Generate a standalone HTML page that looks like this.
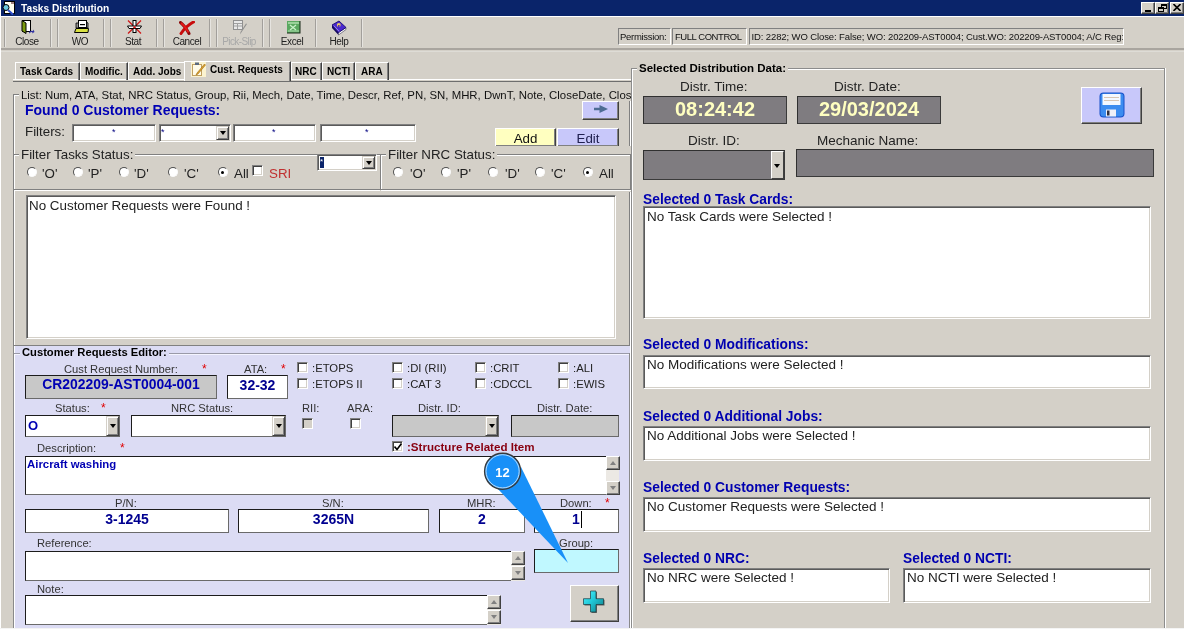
<!DOCTYPE html>
<html><head><meta charset="utf-8">
<style>
*{box-sizing:border-box;margin:0;padding:0}
html,body{width:1184px;height:629px;overflow:hidden;background:#d4d0c8;font-family:"Liberation Sans",sans-serif;color:#000}
.a{position:absolute}
.t{position:absolute;white-space:nowrap;line-height:1}
.sunk{border:1px solid;border-color:#808080 #fff #fff #808080;box-shadow:inset 1px 1px #5a5a5a,inset -1px -1px #d4d0c8;background:#fff}
.raised{border:1px solid;border-color:#fff #404040 #404040 #fff;box-shadow:inset -1px -1px #808080;background:#d4d0c8}
.etchv{position:absolute;width:2px;border-left:1px solid #a29f9b;border-right:1px solid #e6e4e0}
.etchh{position:absolute;height:2px;border-top:1px solid #808080;border-bottom:1px solid #fff}
.grp{position:absolute;border:1px solid #808080;box-shadow:inset 1px 1px #fff,1px 1px #fff}
.cap{position:absolute;white-space:nowrap;line-height:1;padding:0 2px}
.tb{font-size:10px;color:#000;text-align:center;width:46px}
.tab{position:absolute;top:62px;height:18px;border-top:1px solid #fff;border-left:1px solid #fff;border-right:1px solid #404040;box-shadow:inset -1px 0 #808080;font-size:10px;font-weight:bold;text-align:center;line-height:15px}
.lbl{position:absolute;white-space:nowrap;line-height:1;font-size:12px;color:#333}
.blue{color:#0000a8}
.hdr{position:absolute;white-space:nowrap;line-height:1;font-size:13px;font-weight:bold;color:#0000b0}
.ddb{position:absolute;width:13px;border:1px solid;border-color:#d4d0c8 #404040 #404040 #d4d0c8;box-shadow:inset 1px 1px #fff,inset -1px -1px #808080;background:#d4d0c8}
.ddb:after{content:"";position:absolute;left:3px;top:50%;margin-top:-2px;border-left:3.5px solid transparent;border-right:3.5px solid transparent;border-top:4px solid #000}
.radio{position:absolute;width:10px;height:10px;margin:1px 0 0 0.5px;border-radius:50%;background:#fff;border:1px solid;border-color:#505050 #fafafa #fafafa #505050}
.radio.on:after{content:"";position:absolute;left:2.5px;top:2.5px;width:3px;height:3px;border-radius:50%;background:#000}
.chk{position:absolute;width:11px;height:11px;border:1px solid;border-color:#808080 #fff #fff #808080;box-shadow:inset 1px 1px #404040,inset -1px -1px #d4d0c8;background:#fff}
.fb{border:1px solid;border-color:#1c1c1c #6a6a6a #6a6a6a #1c1c1c;background:#fff}
.sbar{background:#ece9e4}
.sbtn{position:absolute;width:14px;height:14px;background:#d4d0c8;border:1px solid;border-color:#fff #404040 #404040 #fff;box-shadow:inset -1px -1px #808080}
.sbtn:after{content:"";position:absolute;left:3px;border-left:3.5px solid transparent;border-right:3.5px solid transparent}
.sbtn.up:after{top:4px;border-bottom:4px solid #808080}
.sbtn.dn:after{top:4px;border-top:4px solid #808080}
.gbox{background:#7f7c80;border:1px solid;border-color:#303030 #3a3a3a #3a3a3a #303030}
.star{position:absolute;color:#e00000;font-size:12px;line-height:1}
</style></head><body><div style="position:absolute;left:0;top:0;width:1184px;height:629px;will-change:transform">
<!-- left edge light line -->
<div class="a" style="left:0;top:0;width:1px;height:629px;background:#fff"></div>

<!-- TITLE BAR -->
<div class="a" style="left:1px;top:0;width:1183px;height:16px;background:#0a246a"></div>
<div class="t" style="left:21px;top:3.5px;font-size:10.2px;font-weight:bold;color:#fff">Tasks Distribution</div>
<div class="a" style="left:1px;top:16px;width:1183px;height:1px;background:#fff"></div>
<!-- title icon -->
<svg class="a" style="left:2px;top:1px" width="13" height="14" viewBox="0 0 13 14">
<rect x="2.5" y="0.5" width="10" height="12" fill="#fffef0" stroke="#000" stroke-width="1"/>
<rect x="9" y="1" width="3" height="2" fill="#a08080"/>
<circle cx="4" cy="6.5" r="3" fill="#6cc8e0" stroke="#000" stroke-width="1"/>
<line x1="6" y1="9" x2="11" y2="13.5" stroke="#3050d0" stroke-width="2"/>
</svg>
<!-- window buttons -->
<div class="a raised" style="left:1141px;top:2px;width:14px;height:12px"></div>
<div class="a" style="left:1145px;top:10px;width:6px;height:2px;background:#000"></div>
<div class="a raised" style="left:1155px;top:2px;width:14px;height:12px"></div>
<svg class="a" style="left:1158px;top:4px" width="9" height="8" viewBox="0 0 9 8"><rect x="3.5" y="0.5" width="5" height="4" fill="none" stroke="#000"/><rect x="3" y="0" width="6" height="2" fill="#000"/><rect x="0.5" y="3.5" width="5" height="4" fill="#d4d0c8" stroke="#000"/><rect x="0" y="3" width="6" height="2" fill="#000"/></svg>
<div class="a raised" style="left:1170px;top:2px;width:14px;height:12px"></div>
<svg class="a" style="left:1173px;top:4px" width="8" height="7" viewBox="0 0 8 7"><path d="M0.5 0 L7.5 7 M7.5 0 L0.5 7" stroke="#000" stroke-width="1.6"/></svg>

<!-- TOOLBAR -->
<div class="a" style="left:1px;top:48px;width:1183px;height:2px;background:#a9a59f"></div>
<div class="a" style="left:1px;top:51px;width:1183px;height:1px;background:#dedcd6"></div>
<div class="etchv" style="left:4px;top:19px;height:28px"></div>
<div class="etchv" style="left:50px;top:19px;height:28px"></div>
<div class="etchv" style="left:57px;top:19px;height:28px"></div>
<div class="etchv" style="left:103px;top:19px;height:28px"></div>
<div class="etchv" style="left:110px;top:19px;height:28px"></div>
<div class="etchv" style="left:156px;top:19px;height:28px"></div>
<div class="etchv" style="left:163px;top:19px;height:28px"></div>
<div class="etchv" style="left:209px;top:19px;height:28px"></div>
<div class="etchv" style="left:216px;top:19px;height:28px"></div>
<div class="etchv" style="left:262px;top:19px;height:28px"></div>
<div class="etchv" style="left:269px;top:19px;height:28px"></div>
<div class="etchv" style="left:315px;top:19px;height:28px"></div>
<div class="etchv" style="left:361px;top:19px;height:28px"></div>
<!-- toolbar labels -->
<div class="t tb" style="left:4px;top:36.5px;color:#222;letter-spacing:-0.4px">Close</div>
<div class="t tb" style="left:57px;top:36.5px;color:#222;letter-spacing:-0.4px">WO</div>
<div class="t tb" style="left:110px;top:36.5px;color:#222;letter-spacing:-0.4px">Stat</div>
<div class="t tb" style="left:164px;top:36.5px;color:#222;letter-spacing:-0.4px">Cancel</div>
<div class="t tb" style="left:216px;top:36.5px;color:#a8a8a8;letter-spacing:-0.6px">Pick-Slip</div>
<div class="t tb" style="left:269px;top:36.5px;color:#222;letter-spacing:-0.4px">Excel</div>
<div class="t tb" style="left:316px;top:36.5px;color:#222;letter-spacing:-0.4px">Help</div>
<!-- toolbar icons -->
<svg class="a" style="left:21px;top:19px" width="14" height="16" viewBox="0 0 14 16">
<rect x="1.5" y="1.5" width="8" height="11" fill="#fff" stroke="#000"/>
<path d="M1 1.5 L5 4 L5 14.5 L1 12 Z" fill="#7a9a10" stroke="#000" stroke-width="1"/>
<path d="M8 13 Q10 11 12 12 L12.5 10.5 L13.5 13 L11 14.5 L11.5 13.2 Q10 12.5 8.5 14.5 Z" fill="#3030a0"/>
</svg>
<svg class="a" style="left:74px;top:20px" width="15" height="14" viewBox="0 0 15 14">
<rect x="4.5" y="0.5" width="8" height="7" fill="#fff" stroke="#000"/>
<rect x="6" y="4" width="5" height="1.2" fill="#000"/>
<path d="M2 3 L4.5 3 L4.5 8 L2 8 Z" fill="#909090" stroke="#000" stroke-width="0.8"/>
<path d="M12.5 2 L14 3 L14 8 L12.5 8 Z" fill="#909090" stroke="#000" stroke-width="0.8"/>
<path d="M2 8.5 L14.5 8.5 L14 12.5 L0.5 12.5 Z" fill="#d8e040" stroke="#000" stroke-width="1"/>
</svg>
<svg class="a" style="left:127px;top:20px" width="15" height="14" viewBox="0 0 15 14">
<path d="M1 0.5 L14 13.5 M14 0.5 L1 13.5" stroke="#d01818" stroke-width="1.3"/>
<rect x="6" y="0.5" width="3" height="12" fill="#fff" stroke="#000"/>
<path d="M0.5 6 L14.5 6 L13 8.5 L2 8.5 Z" fill="#fff" stroke="#000"/>
<circle cx="7.5" cy="7.2" r="1.2" fill="#d01818"/>
</svg>
<svg class="a" style="left:179px;top:21px" width="16" height="14" viewBox="0 0 16 14">
<path d="M1.5 1.5 Q6 5 10 12.5" stroke="#8a0a0a" stroke-width="3" fill="none" stroke-linecap="round"/>
<path d="M14.5 1 Q7 5 2 12.5" stroke="#c80c0c" stroke-width="3" fill="none" stroke-linecap="round"/>
<path d="M2 2 Q6 5 9.5 11.5" stroke="#e81818" stroke-width="1.6" fill="none"/>
</svg>
<svg class="a" style="left:233px;top:20px" width="15" height="15" viewBox="0 0 15 15">
<rect x="0.5" y="0.5" width="9" height="9" fill="#e8e8e8" stroke="#909090"/>
<path d="M1 3.5 H9 M1 6 H9 M4.5 3 V9" stroke="#a0a0a0"/>
<path d="M14 4 L8 13 L7 14.5 L7.5 12 L13 3.5 Z" fill="#909090"/>
</svg>
<svg class="a" style="left:287px;top:21px" width="14" height="13" viewBox="0 0 14 13">
<rect x="0" y="0" width="13.5" height="12.5" fill="#1a2a1a"/>
<rect x="0" y="0" width="12.5" height="11.5" fill="#5aa860"/>
<rect x="1" y="1" width="11" height="2" fill="#9ad29a"/>
<path d="M3 4 L9 9 M9 4 L3 9" stroke="#c8f0c8" stroke-width="1.3"/>
<rect x="1" y="9.5" width="11" height="1" fill="#b0e0b0"/>
</svg>
<svg class="a" style="left:332px;top:20px" width="16" height="16" viewBox="0 0 16 16">
<path d="M0 5 L6.5 12.5 L6.5 15 L0 8 Z" fill="#140860"/>
<path d="M6.5 12.5 L14 7.5 L14 9.5 L6.5 15 Z" fill="#f4f4f4" stroke="#202040" stroke-width="0.5"/>
<path d="M7 1 L14 7.5 L6.5 12.5 L0 5 Z" fill="#4a28d0" stroke="#180a70" stroke-width="0.9"/>
<path d="M1.8 5.6 L7.2 11.4" stroke="#a090f0" stroke-width="0.9"/>
<circle cx="6.8" cy="5" r="1.9" fill="#e8c860"/>
<rect x="6" y="5" width="1.6" height="2.6" fill="#5030b0"/>
</svg>

<!-- status boxes -->
<div class="a" style="left:618px;top:28px;width:53px;height:17px;border:1px solid;border-color:#808080 #fff #fff #808080"></div>
<div class="t" style="left:620px;top:32px;font-size:9.5px;color:#111;letter-spacing:-0.3px">Permission:</div>
<div class="a" style="left:672px;top:28px;width:75px;height:17px;border:1px solid;border-color:#808080 #fff #fff #808080"></div>
<div class="t" style="left:675px;top:32px;font-size:9.5px;color:#111;letter-spacing:-0.45px">FULL CONTROL</div>
<div class="a" style="left:749px;top:28px;width:375px;height:17px;border:1px solid;border-color:#808080 #fff #fff #808080"></div>
<div class="a" style="left:750px;top:29px;width:373px;height:15px;overflow:hidden"><div class="t" style="left:1.5px;top:2.6px;font-size:9.5px;color:#111;letter-spacing:-0.11px">ID: 2282; WO Close: False; WO: 202209-AST0004; Cust.WO: 202209-AST0004; A/C Reg: </div></div>

<!-- TABS -->
<div class="a" style="left:13px;top:79px;width:618px;height:1px;background:#fff"></div>
<div class="a" style="left:13px;top:81px;width:618px;height:1px;background:#6e6e6e"></div>
<div class="tab" style="left:15px;width:65px"><span class="t" style="left:4px;top:4px">Task Cards</span></div>
<div class="tab" style="left:80px;width:48px"><span class="t" style="left:4px;top:4px">Modific.</span></div>
<div class="tab" style="left:128px;width:56px;border-right:0;box-shadow:none"><span class="t" style="left:4px;top:4px">Add. Jobs</span></div>
<div class="a" style="left:184px;top:61px;width:107px;height:20px;background:#d4d0c8;border-top:1px solid #fff;border-left:1px solid #fff;border-right:1px solid #404040;box-shadow:inset -1px 0 #808080"></div>
<span class="t" style="left:210px;top:65px;font-size:10px;font-weight:bold">Cust. Requests</span>
<svg class="a" style="left:191px;top:62px" width="15" height="15" viewBox="0 0 15 15">
<rect x="0" y="0" width="15" height="15" fill="#fbf3d0"/>
<rect x="1.5" y="2.5" width="9" height="11" fill="#fffbe8" stroke="#c0a060"/>
<rect x="4" y="0.5" width="4" height="2.5" fill="#5a6a80"/>
<path d="M13.5 2 L6 11 L5 13 L7 12 L14.5 3 Z" fill="#e0a030" stroke="#a07010" stroke-width="0.6"/>
</svg>
<div class="tab" style="left:291px;width:31px"><span class="t" style="left:3px;top:4px">NRC</span></div>
<div class="tab" style="left:322px;width:33px"><span class="t" style="left:4px;top:4px">NCTI</span></div>
<div class="tab" style="left:355px;width:34px"><span class="t" style="left:5px;top:4px">ARA</span></div>

<!-- LEFT TAB PAGE (clipped at 631) -->
<div class="a" style="left:0;top:0;width:631px;height:629px;overflow:hidden">
 <!-- list group -->
 <div class="grp" style="left:13px;top:94px;width:617px;height:252px"></div>
 <div class="t" style="left:19px;top:90px;font-size:11.4px;background:#d4d0c8;padding:0 2px;color:#111">List: Num, ATA, Stat, NRC Status, Group, Rii, Mech, Date, Time, Descr, Ref, PN, SN, MHR, DwnT, Note, CloseDate, CloseTime</div>
 <div class="t" style="left:25px;top:103px;font-size:14px;font-weight:bold;color:#0000b4">Found 0 Customer Requests:</div>
 <div class="t" style="left:25px;top:125px;font-size:13.33px;color:#222">Filters:</div>
 <div class="a sunk" style="left:72px;top:124px;width:84px;height:18px"></div>
 <div class="t" style="left:112px;top:128px;font-size:9px;color:#000080">*</div>
 <div class="a sunk" style="left:159px;top:124px;width:72px;height:18px"></div>
 <div class="t" style="left:161px;top:128px;font-size:9px;color:#000080">*</div>
 <div class="ddb" style="left:216px;top:126px;height:14px"></div>
 <div class="a sunk" style="left:233px;top:124px;width:83px;height:18px"></div>
 <div class="t" style="left:272px;top:128px;font-size:9px;color:#000080">*</div>
 <div class="a sunk" style="left:320px;top:124px;width:96px;height:18px"></div>
 <div class="t" style="left:365px;top:128px;font-size:9px;color:#000080">*</div>
 <!-- arrow / add / edit -->
 <div class="a" style="left:582px;top:101px;width:37px;height:19px;background:#c8c8fa;border:1px solid;border-color:#fff #404040 #404040 #fff;box-shadow:inset -1px -1px #808080"></div>
 <svg class="a" style="left:593px;top:104px" width="16" height="10" viewBox="0 0 16 10"><path d="M1 3.8 H6.5 V1 L15 5 L6.5 9 V6.2 H1 Z" fill="#4e6c94"/></svg>
 <div class="a" style="left:495px;top:128px;width:61px;height:19px;background:#ffffc0;border:1px solid;border-color:#fff #404040 #404040 #fff;box-shadow:inset -1px -1px #808080"></div>
 <div class="t" style="left:495px;top:131.5px;width:61px;text-align:center;font-size:13.33px;color:#111">Add</div>
 <div class="a" style="left:557px;top:128px;width:62px;height:19px;background:#c8c8fa;border:1px solid;border-color:#fff #404040 #404040 #fff;box-shadow:inset -1px -1px #808080"></div>
 <div class="t" style="left:557px;top:131.5px;width:62px;text-align:center;font-size:13.33px;color:#202050">Edit</div>
 <!-- filter tasks status group -->
 <div class="grp" style="left:13px;top:154px;width:380px;height:36px"></div>
 <div class="t" style="left:19px;top:147.8px;font-size:13.33px;background:#d4d0c8;padding:0 2px;color:#222">Filter Tasks Status:</div>
 <div class="radio" style="left:26px;top:166px"></div><div class="t" style="left:42px;top:166.7px;font-size:13.33px;color:#222">'O'</div>
 <div class="radio" style="left:72px;top:166px"></div><div class="t" style="left:88px;top:166.7px;font-size:13.33px;color:#222">'P'</div>
 <div class="radio" style="left:118px;top:166px"></div><div class="t" style="left:134px;top:166.7px;font-size:13.33px;color:#222">'D'</div>
 <div class="radio" style="left:167px;top:166px"></div><div class="t" style="left:184px;top:166.7px;font-size:13.33px;color:#222">'C'</div>
 <div class="radio on" style="left:217px;top:166px"></div><div class="t" style="left:234px;top:166.7px;font-size:13.33px;color:#222">All</div>
 <div class="chk" style="left:252px;top:165px"></div><div class="t" style="left:269px;top:166.7px;font-size:13.33px;color:#c03030">SRI</div>
 <div class="a sunk" style="left:317px;top:154px;width:60px;height:17px"></div>
 <div class="a" style="left:320px;top:157px;width:4px;height:11px;background:#0a246a"></div><div class="t" style="left:320px;top:158px;font-size:8px;color:#fff">*</div>
 <div class="ddb" style="left:362px;top:156px;height:13px"></div>
 <!-- filter NRC status group -->
 <div class="a" style="left:380px;top:146px;width:251px;height:46px;background:#d4d0c8"></div>
 <div class="grp" style="left:380px;top:154px;width:251px;height:36px"></div>
 <div class="t" style="left:386px;top:147.8px;font-size:13.33px;background:#d4d0c8;padding:0 2px;color:#222">Filter NRC Status:</div>
 <div class="radio" style="left:392px;top:166px"></div><div class="t" style="left:410px;top:166.7px;font-size:13.33px;color:#222">'O'</div>
 <div class="radio" style="left:440px;top:166px"></div><div class="t" style="left:457px;top:166.7px;font-size:13.33px;color:#222">'P'</div>
 <div class="radio" style="left:487px;top:166px"></div><div class="t" style="left:505px;top:166.7px;font-size:13.33px;color:#222">'D'</div>
 <div class="radio" style="left:534px;top:166px"></div><div class="t" style="left:551px;top:166.7px;font-size:13.33px;color:#222">'C'</div>
 <div class="radio on" style="left:582px;top:166px"></div><div class="t" style="left:599px;top:166.7px;font-size:13.33px;color:#222">All</div>
 <!-- listbox -->
 <div class="a sunk" style="left:26px;top:195px;width:590px;height:144px"></div>
 <div class="t" style="left:29px;top:198.5px;font-size:13.4px;color:#222">No Customer Requests were Found !</div>
</div>

<!-- EDITOR (lavender) -->
<div class="a" style="left:0;top:0;width:631px;height:629px;overflow:hidden">
 <div class="a" style="left:14px;top:346px;width:617px;height:282px;background:#dcdcf4"></div>
 <div class="a" style="left:13px;top:346px;width:1px;height:282px;background:#8a8a8a"></div>
 <div class="a" style="left:14px;top:346px;width:1px;height:282px;background:#fff"></div>
 <div class="a" style="left:629px;top:353px;width:1px;height:275px;background:#8a8a8a"></div>
 <div class="a" style="left:630px;top:346px;width:1px;height:282px;background:#fff"></div>
 <div class="a" style="left:14px;top:353px;width:615px;height:1px;background:#9a9aa8"></div>
 <div class="a" style="left:15px;top:354px;width:614px;height:1px;background:#f4f4ff"></div>
 <div class="t" style="left:20px;top:347px;font-size:11.2px;font-weight:bold;background:#dcdcf4;padding:0 2px;color:#000">Customer Requests Editor:</div>
 <!-- CR number -->
 <div class="t" style="left:64px;top:364px;font-size:11.2px;color:#333">Cust Request Number:</div>
 <div class="star" style="left:202px;top:363px">*</div>
 <div class="t" style="left:244px;top:364px;font-size:11.2px;color:#333">ATA:</div>
 <div class="star" style="left:281px;top:363px">*</div>
 <div class="a fb" style="left:25px;top:375px;width:192px;height:24px;background:#c8c8c8"></div>
 <div class="t" style="left:25px;top:378px;width:192px;text-align:center;font-size:13.9px;font-weight:bold;color:#0000b4">CR202209-AST0004-001</div>
 <div class="a fb" style="left:227px;top:375px;width:61px;height:24px"></div>
 <div class="t" style="left:227px;top:378px;width:61px;text-align:center;font-size:14px;font-weight:bold;color:#000090">32-32</div>
 <!-- checkboxes -->
 <div class="chk" style="left:297px;top:362px"></div><div class="t" style="left:312px;top:362.7px;font-size:11.3px;color:#222">:ETOPS</div>
 <div class="chk" style="left:297px;top:378px"></div><div class="t" style="left:312px;top:378.7px;font-size:11.3px;color:#222">:ETOPS II</div>
 <div class="chk" style="left:392px;top:362px"></div><div class="t" style="left:407px;top:362.7px;font-size:11.3px;color:#222">:DI (RII)</div>
 <div class="chk" style="left:392px;top:378px"></div><div class="t" style="left:407px;top:378.7px;font-size:11.3px;color:#222">:CAT 3</div>
 <div class="chk" style="left:475px;top:362px"></div><div class="t" style="left:490px;top:362.7px;font-size:11.3px;color:#222">:CRIT</div>
 <div class="chk" style="left:475px;top:378px"></div><div class="t" style="left:490px;top:378.7px;font-size:11.3px;color:#222">:CDCCL</div>
 <div class="chk" style="left:558px;top:362px"></div><div class="t" style="left:573px;top:362.7px;font-size:11.3px;color:#222">:ALI</div>
 <div class="chk" style="left:558px;top:378px"></div><div class="t" style="left:573px;top:378.7px;font-size:11.3px;color:#222">:EWIS</div>
 <!-- status row -->
 <div class="t" style="left:55px;top:402.7px;font-size:11.2px;color:#333">Status:</div>
 <div class="star" style="left:101px;top:402px">*</div>
 <div class="t" style="left:171px;top:402.7px;font-size:11.2px;color:#333">NRC Status:</div>
 <div class="t" style="left:302px;top:402.7px;font-size:11.2px;color:#333">RII:</div>
 <div class="t" style="left:347px;top:402.7px;font-size:11.2px;color:#333">ARA:</div>
 <div class="t" style="left:418px;top:402.7px;font-size:11.2px;color:#333">Distr. ID:</div>
 <div class="t" style="left:537px;top:402.7px;font-size:11.2px;color:#333">Distr. Date:</div>
 <div class="a fb" style="left:25px;top:415px;width:95px;height:22px"></div>
 <div class="t" style="left:28px;top:418.5px;font-size:13px;font-weight:bold;color:#0000b4">O</div>
 <div class="ddb" style="left:106px;top:416px;height:20px"></div>
 <div class="a fb" style="left:131px;top:415px;width:155px;height:22px"></div>
 <div class="ddb" style="left:272px;top:416px;height:20px"></div>
 <div class="chk" style="left:302px;top:418px;background:#d4d0c8"></div>
 <div class="chk" style="left:350px;top:418px"></div>
 <div class="a fb" style="left:392px;top:415px;width:107px;height:22px;background:#c8c8c8"></div>
 <div class="ddb" style="left:485px;top:416px;height:20px"></div>
 <div class="a fb" style="left:511px;top:415px;width:108px;height:22px;background:#c8c8c8"></div>
 <!-- description -->
 <div class="t" style="left:37px;top:443px;font-size:11.2px;color:#333">Description:</div>
 <div class="star" style="left:120px;top:442px">*</div>
 <div class="chk" style="left:392px;top:441px"></div>
 <svg class="a" style="left:394px;top:443px" width="8" height="8" viewBox="0 0 8 8"><path d="M0.5 3.5 L3 6.5 L7.5 0.5" stroke="#000" stroke-width="1.6" fill="none"/></svg>
 <div class="t" style="left:407px;top:440.7px;font-size:11.6px;font-weight:bold;color:#880010">:Structure Related Item</div>
 <div class="a fb" style="left:25px;top:456px;width:582px;height:39px"></div>
 <div class="t" style="left:27px;top:459px;font-size:11.4px;font-weight:bold;color:#0000b4">Aircraft washing</div>
 <div class="a sbar" style="left:606px;top:456px;width:13px;height:39px"></div>
 <div class="sbtn up" style="left:606px;top:456px"></div>
 <div class="sbtn dn" style="left:606px;top:481px"></div>
 <!-- PN row -->
 <div class="t" style="left:115px;top:497.5px;font-size:11.2px;color:#333">P/N:</div>
 <div class="t" style="left:322px;top:497.5px;font-size:11.2px;color:#333">S/N:</div>
 <div class="t" style="left:467px;top:497.5px;font-size:11.2px;color:#333">MHR:</div>
 <div class="t" style="left:560px;top:497.5px;font-size:11.2px;color:#333">Down:</div>
 <div class="star" style="left:605px;top:497px">*</div>
 <div class="a fb" style="left:25px;top:509px;width:204px;height:24px"></div>
 <div class="t" style="left:25px;top:512px;width:204px;text-align:center;font-size:14px;font-weight:bold;color:#000090">3-1245</div>
 <div class="a fb" style="left:238px;top:509px;width:191px;height:24px"></div>
 <div class="t" style="left:238px;top:512px;width:191px;text-align:center;font-size:14px;font-weight:bold;color:#000090">3265N</div>
 <div class="a fb" style="left:439px;top:509px;width:86px;height:24px"></div>
 <div class="t" style="left:439px;top:512px;width:86px;text-align:center;font-size:14px;font-weight:bold;color:#000090">2</div>
 <div class="a fb" style="left:534px;top:509px;width:85px;height:24px"></div>
 <div class="t" style="left:572px;top:512px;font-size:14px;font-weight:bold;color:#000090">1</div>
 <div class="a" style="left:581px;top:511px;width:1px;height:17px;background:#000"></div>
 <!-- reference -->
 <div class="t" style="left:37px;top:537.5px;font-size:11.2px;color:#333">Reference:</div>
 <div class="t" style="left:559px;top:537.5px;font-size:11.2px;color:#333">Group:</div>
 <div class="a fb" style="left:25px;top:551px;width:487px;height:30px"></div>
 <div class="a sbar" style="left:511px;top:551px;width:14px;height:30px"></div>
 <div class="sbtn up" style="left:511px;top:551px"></div>
 <div class="sbtn dn" style="left:511px;top:566px"></div>
 <div class="a fb" style="left:534px;top:549px;width:85px;height:24px;background:#c0f8ff"></div>
 <!-- note -->
 <div class="t" style="left:37px;top:583.5px;font-size:11.2px;color:#333">Note:</div>
 <div class="a fb" style="left:25px;top:595px;width:463px;height:30px"></div>
 <div class="a sbar" style="left:487px;top:595px;width:14px;height:30px"></div>
 <div class="sbtn up" style="left:487px;top:595px"></div>
 <div class="sbtn dn" style="left:487px;top:610px"></div>
 <div class="a" style="left:570px;top:585px;width:49px;height:37px;background:#d4d0c8;border:1px solid;border-color:#fff #404040 #404040 #fff;box-shadow:inset -1px -1px #808080"></div>
 <svg class="a" style="left:582px;top:590px" width="24" height="24" viewBox="0 0 24 24">
 <defs><linearGradient id="pg" x1="0" y1="0" x2="1" y2="1"><stop offset="0" stop-color="#50f4ff"/><stop offset="0.45" stop-color="#20c8d8"/><stop offset="1" stop-color="#107880"/></linearGradient></defs>
 <path d="M8.5 1 H14 V8.7 H21.5 V14.5 H14 V22 H8.5 V14.5 H1.5 V8.7 H8.5 Z" fill="#303838" transform="translate(1,1)" opacity="0.7"/>
 <path d="M8.5 1 H14 V8.7 H21.5 V14.5 H14 V22 H8.5 V14.5 H1.5 V8.7 H8.5 Z" fill="url(#pg)" stroke="#1a3a40" stroke-width="0.7"/>
 </svg>
</div>

<!-- RIGHT GROUP -->
<div class="a" style="left:631px;top:68px;width:534px;height:561px;border-left:1px solid #8c8c8c;border-top:1px solid #8c8c8c;border-right:1px solid #8c8c8c;box-shadow:inset 1px 1px #fff,1px 0 #fff"></div>
<div class="t" style="left:637px;top:62.5px;font-size:11.5px;font-weight:bold;background:#d4d0c8;padding:0 2px">Selected Distribution Data:</div>
<div class="t" style="left:680px;top:80px;font-size:13.5px;color:#222">Distr. Time:</div>
<div class="t" style="left:834px;top:80px;font-size:13.5px;color:#222">Distr. Date:</div>
<div class="a gbox" style="left:643px;top:96px;width:144px;height:28px"></div>
<div class="t" style="left:643px;top:99px;width:144px;text-align:center;font-size:20px;font-weight:bold;color:#ffffc0">08:24:42</div>
<div class="a gbox" style="left:797px;top:96px;width:144px;height:28px"></div>
<div class="t" style="left:797px;top:99px;width:144px;text-align:center;font-size:20px;font-weight:bold;color:#ffffc0">29/03/2024</div>
<div class="a" style="left:1081px;top:87px;width:61px;height:37px;background:#c8c8fa;border:1px solid;border-color:#fff #404040 #404040 #fff;box-shadow:inset -1px -1px #808080"></div>
<svg class="a" style="left:1099px;top:92px" width="26" height="26" viewBox="0 0 26 26">
<rect x="0.5" y="0.5" width="25" height="25" rx="4" fill="#1850c8"/>
<rect x="1.5" y="1.5" width="23" height="23" rx="3" fill="#3c8cf0"/>
<rect x="3.5" y="2" width="18" height="11" fill="#f4f8ff"/>
<path d="M5 5.5 H20 M5 8.5 H20" stroke="#d0b8a0" stroke-width="0.8"/>
<rect x="7" y="17.5" width="10" height="7" fill="#f0f0f8"/>
<rect x="8" y="18.5" width="2.5" height="5" fill="#303040"/>
</svg>
<div class="t" style="left:688px;top:134px;font-size:13.5px;color:#222">Distr. ID:</div>
<div class="t" style="left:817px;top:134px;font-size:13.5px;color:#222">Mechanic Name:</div>
<div class="a gbox" style="left:643px;top:150px;width:142px;height:30px"></div>
<div class="a" style="left:771px;top:151px;width:13px;height:28px;background:#d4d0c8;border:1px solid;border-color:#fff #404040 #404040 #fff"></div>
<div class="a" style="left:774px;top:164px;width:0;height:0;border-left:3.5px solid transparent;border-right:3.5px solid transparent;border-top:4px solid #000"></div>
<div class="a gbox" style="left:796px;top:149px;width:358px;height:28px"></div>

<div class="hdr" style="left:643px;top:193px;font-size:13.8px">Selected 0 Task Cards:</div>
<div class="a sunk" style="left:643px;top:206px;width:508px;height:113px"></div>
<div class="t" style="left:647px;top:210px;font-size:13.5px;color:#222">No Task Cards were Selected !</div>

<div class="hdr" style="left:643px;top:338px;font-size:13.8px">Selected 0 Modifications:</div>
<div class="a sunk" style="left:643px;top:355px;width:508px;height:34px"></div>
<div class="t" style="left:647px;top:358px;font-size:13.5px;color:#222">No Modifications were Selected !</div>

<div class="hdr" style="left:643px;top:410px;font-size:13.8px">Selected 0 Additional Jobs:</div>
<div class="a sunk" style="left:643px;top:426px;width:508px;height:35px"></div>
<div class="t" style="left:647px;top:429px;font-size:13.5px;color:#222">No Additional Jobs were Selected !</div>

<div class="hdr" style="left:643px;top:481px;font-size:13.8px">Selected 0 Customer Requests:</div>
<div class="a sunk" style="left:643px;top:497px;width:508px;height:35px"></div>
<div class="t" style="left:647px;top:500px;font-size:13.5px;color:#222">No Customer Requests were Selected !</div>

<div class="hdr" style="left:643px;top:552px;font-size:13.8px">Selected 0 NRC:</div>
<div class="a sunk" style="left:643px;top:568px;width:247px;height:35px"></div>
<div class="t" style="left:647px;top:571px;font-size:13.5px;color:#222">No NRC were Selected !</div>

<div class="hdr" style="left:903px;top:552px;font-size:13.8px">Selected 0 NCTI:</div>
<div class="a sunk" style="left:903px;top:568px;width:248px;height:35px"></div>
<div class="t" style="left:907px;top:571px;font-size:13.5px;color:#222">No NCTI were Selected !</div>

<!-- bottom light row -->
<div class="a" style="left:0;top:628px;width:1184px;height:1px;background:#f4f4f4"></div>

<!-- CALLOUT -->
<svg class="a" style="left:480px;top:450px" width="100" height="120" viewBox="480 450 100 120">
<path d="M497 488 L568 563 L521 467 Z" fill="#1890f8"/>
<circle cx="502.6" cy="471.3" r="18" fill="#1890f8" stroke="#3a3a3a" stroke-width="1.4"/>
<circle cx="502.6" cy="471.3" r="16.6" fill="none" stroke="#e0f0ff" stroke-width="0.8"/>
<text x="502.6" y="476.8" text-anchor="middle" font-family="Liberation Sans" font-weight="bold" font-size="13" fill="#fff">12</text>
</svg>
</div></body></html>
